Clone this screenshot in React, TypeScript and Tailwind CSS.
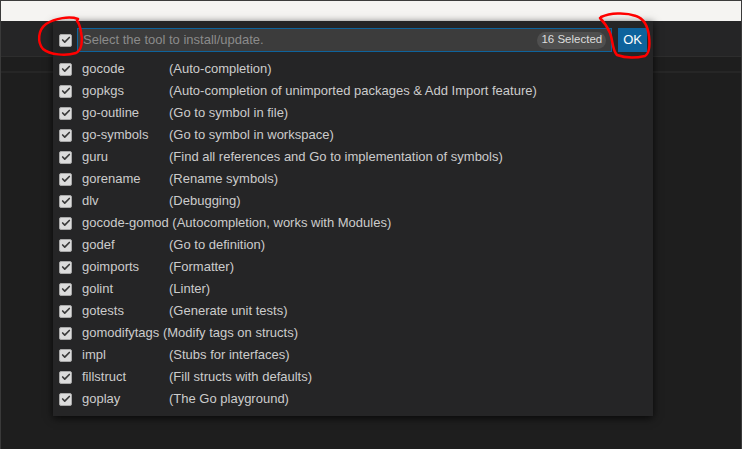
import { Check } from 'lucide-react';

const tools = [
  ['gocode', '(Auto-completion)'],
  ['gopkgs', '(Auto-completion of unimported packages & Add Import feature)'],
  ['go-outline', '(Go to symbol in file)'],
  ['go-symbols', '(Go to symbol in workspace)'],
  ['guru', '(Find all references and Go to implementation of symbols)'],
  ['gorename', '(Rename symbols)'],
  ['dlv', '(Debugging)'],
  ['gocode-gomod', '(Autocompletion, works with Modules)'],
  ['godef', '(Go to definition)'],
  ['goimports', '(Formatter)'],
  ['golint', '(Linter)'],
  ['gotests', '(Generate unit tests)'],
  ['gomodifytags', '(Modify tags on structs)'],
  ['impl', '(Stubs for interfaces)'],
  ['fillstruct', '(Fill structs with defaults)'],
  ['goplay', '(The Go playground)'],
];

function Box() {
  return (
    <span className="w-[13px] h-[13px] shrink-0 rounded-[2px] bg-[#dcdcdc] border border-[#a8a8a8] flex items-center justify-center">
      <Check size={10} strokeWidth={4} className="text-[#3a3a3a]" />
    </span>
  );
}

export default function App() {
  return (
    <div
      className="relative w-[742px] h-[449px] overflow-hidden bg-[#1e1e1e] border-l border-r border-[#3a3a3a]"
      style={{ fontFamily: '"Liberation Sans", Arial, sans-serif' }}
    >
      {/* title strip */}
      <div className="h-[21px] bg-[#f5f4f2] border-t border-[#3c3c3c]" />
      {/* tab bar */}
      <div className="h-[36px] bg-[#252526] border-b border-[#2d2d2d]" />
      <div className="h-[16px] bg-[#1e1e1e] border-b-2 border-[#262626]" />

      {/* quick pick */}
      <div className="absolute left-[52px] top-[21px] w-[600px] h-[395px] bg-[#252526] shadow-[0_2px_8px_rgba(0,0,0,0.75)] px-[6px] pt-[7px] text-[13px] text-[#cccccc]">
        <div className="flex items-center h-[24px]">
          <Box />
          <div className="ml-[5px] flex-1 h-[24px] bg-[#3c3c3c] border border-[#0e639c] flex items-center pl-[5px] pr-[5px]">
            <span className="flex-1 text-[#8b8b8b]">Select the tool to install/update.</span>
            <span className="h-[17px] px-[4px] rounded-full bg-[#4f4f4f] text-[11.5px] text-[#dddddd] flex items-center">
              16 Selected
            </span>
          </div>
          <button className="ml-[6px] h-[24px] px-[5px] bg-[#0e639c] text-white text-[13px]">OK</button>
        </div>
        <div className="mt-[6px]">
          {tools.map(([name, desc]) => (
            <div key={name} className="h-[22px] flex items-center">
              <Box />
              <span
                className={
                  name.length < 12
                    ? 'ml-[10px] inline-block min-w-[87px] whitespace-pre'
                    : 'ml-[10px] inline-block whitespace-pre'
                }
              >
                {name + ' '}
              </span>
              <span className="whitespace-nowrap">{desc}</span>
            </div>
          ))}
        </div>
      </div>

      {/* red marker annotations */}
      <svg className="absolute -left-px top-0 pointer-events-none" width="742" height="449">
        <path
          d="M78 19 C70 16, 55 18, 46 24 C38 30, 37 42, 43 49 C50 55, 66 56, 76 53 C82 50, 83 40, 81 32 C80 26, 79 23, 77 21"
          fill="none"
          stroke="#ff0000"
          strokeWidth="2.5"
          strokeLinecap="round"
        />
        <path
          d="M601 17 C610 13, 625 12, 636 16 C645 19, 648 28, 649 36 C650 45, 650 53, 645 56 C636 58, 625 58, 617 55 C612 50, 613 40, 610 33 C607 26, 603 21, 600 18"
          fill="none"
          stroke="#ff0000"
          strokeWidth="2.5"
          strokeLinecap="round"
        />
      </svg>
    </div>
  );
}
